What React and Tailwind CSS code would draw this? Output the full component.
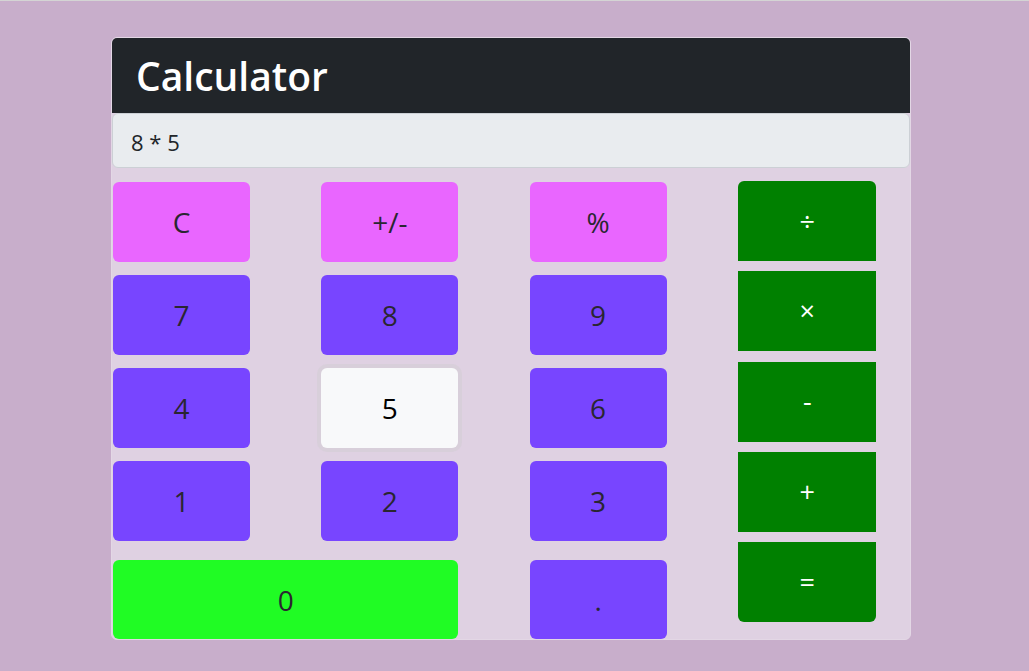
import React from "react";

const left = [
  { label: "C", color: "bg-[#e966ff]" },
  { label: "+/-", color: "bg-[#e966ff]" },
  { label: "%", color: "bg-[#e966ff]" },
  { label: "7", color: "bg-[#7845ff]" },
  { label: "8", color: "bg-[#7845ff]" },
  { label: "9", color: "bg-[#7845ff]" },
  { label: "4", color: "bg-[#7845ff]" },
  { label: "5", color: "bg-[#f8f9fa]", active: true },
  { label: "6", color: "bg-[#7845ff]" },
  { label: "1", color: "bg-[#7845ff]" },
  { label: "2", color: "bg-[#7845ff]" },
  { label: "3", color: "bg-[#7845ff]" },
];

const ops = ["÷", "×", "-", "+", "="];

export default function App() {
  return (
    <div
      className="min-h-[671px] border-t border-[#d4d4d4] bg-[#c8aecb] pt-9"
      style={{ fontFamily: '"Open Sans", "Noto Sans", sans-serif' }}
    >
      <div className="ml-[111px] w-[800px] overflow-hidden rounded-md border border-[#e3d7e5] bg-[#dfd1e2]">
        <div className="flex h-[75px] items-center bg-[#212529] px-6">
          <h1 className="text-[39px] font-semibold leading-none text-white">
            Calculator
          </h1>
        </div>
        <div className="flex h-[55px] items-center rounded-md border border-[#ccd0d5] bg-[#e9ecef] px-[18px] pt-[3px] text-[22px] text-[#212529]">
          8 * 5
        </div>
        <div className="mt-[14px] flex pl-px">
          <div className="grid grid-cols-[137px_137px_137px] gap-x-[71.3px] gap-y-[13px]">
            {left.map((b) => (
              <button
                key={b.label}
                className={`h-20 rounded-md text-[28px] ${b.color} ${
                  b.active
                    ? "text-black shadow-[0_0_0_4px_rgba(211,205,214,0.6)]"
                    : "text-[#2a2631]"
                }`}
              >
                {b.label}
              </button>
            ))}
            <button className="col-span-2 mt-[6px] h-[79px] rounded-md bg-[#20fc24] text-[28px] text-[#2a2631]">
              0
            </button>
            <button className="mt-[6px] h-[79px] rounded-md bg-[#7845ff] text-[28px] text-[#2a2631]">
              .
            </button>
          </div>
          <div className="-mt-px ml-[71.7px] flex w-[138px] flex-col gap-[10.25px] self-start">
            {ops.map((o, i) => (
              <button
                key={o}
                className={`h-20 bg-[#008000] text-[27px] text-white ${
                  i === 0 ? "rounded-t-md" : ""
                } ${i === ops.length - 1 ? "rounded-b-md" : ""}`}
              >
                {o}
              </button>
            ))}
          </div>
        </div>
      </div>
    </div>
  );
}
